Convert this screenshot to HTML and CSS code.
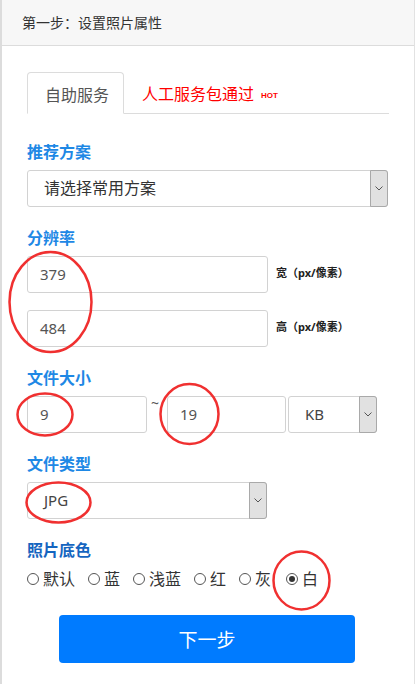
FILE: index.html
```html
<!DOCTYPE html>
<html lang="zh">
<head>
<meta charset="utf-8">
<title>设置照片属性</title>
<link rel="stylesheet" href="styles.css">
</head>
<body>
<div class="card">
  <div class="card-header">第一步：设置照片属性</div>
  <div class="card-body">
    <div class="tabs">
      <div class="tab active">自助服务</div>
      <div class="tab hot">人工服务包通过<span class="hot-badge">HOT</span></div>
    </div>

    <div class="label first">推荐方案</div>
    <div class="select full">
      <span class="select-text">请选择常用方案</span>
      <span class="select-btn"><svg width="8" height="5" viewBox="0 0 8 5"><path d="M0.5 0.5 L4 4 L7.5 0.5" fill="none" stroke="#555" stroke-width="1"/></svg></span>
    </div>

    <div class="label">分辨率</div>
    <div class="res-row">
      <div class="input res-input">379</div>
      <span class="unit">宽（px/像素）</span>
    </div>
    <div class="res-row second">
      <div class="input res-input">484</div>
      <span class="unit">高（px/像素）</span>
    </div>

    <div class="label">文件大小</div>
    <div class="size-row">
      <div class="input size-input">9</div>
      <span class="tilde">~</span>
      <div class="input size-input2">19</div>
      <div class="select kb">
        <span class="select-text">KB</span>
        <span class="select-btn"><svg width="8" height="5" viewBox="0 0 8 5"><path d="M0.5 0.5 L4 4 L7.5 0.5" fill="none" stroke="#555" stroke-width="1"/></svg></span>
      </div>
    </div>

    <div class="label">文件类型</div>
    <div class="select type">
      <span class="select-text">JPG</span>
      <span class="select-btn"><svg width="8" height="5" viewBox="0 0 8 5"><path d="M0.5 0.5 L4 4 L7.5 0.5" fill="none" stroke="#555" stroke-width="1"/></svg></span>
    </div>

    <div class="label dark">照片底色</div>
    <div class="radios">
      <span class="radio"><span class="dot"></span>默认</span>
      <span class="radio"><span class="dot"></span>蓝</span>
      <span class="radio"><span class="dot"></span>浅蓝</span>
      <span class="radio"><span class="dot"></span>红</span>
      <span class="radio"><span class="dot"></span>灰</span>
      <span class="radio checked"><span class="dot"></span>白</span>
    </div>

    <button class="next-btn">下一步</button>
  </div>
</div>

<svg class="marks" width="415" height="684" viewBox="0 0 415 684">
  <g fill="none" stroke="#f03030" stroke-width="2.5">
    <ellipse cx="50.5" cy="302" rx="41" ry="50"/>
    <ellipse cx="45" cy="414.5" rx="27.5" ry="21"/>
    <ellipse cx="189.5" cy="414" rx="29" ry="30"/>
    <ellipse cx="58.5" cy="502.5" rx="32" ry="20"/>
    <ellipse cx="301.5" cy="580.5" rx="28" ry="29"/>
  </g>
</svg>
</body>
</html>
```

FILE: styles.css
```css
html, body {
  margin: 0;
  padding: 0;
  background: #fff;
}
body {
  font-family: "Noto Sans", "Noto Sans CJK SC", sans-serif;
  color: #333;
  position: relative;
  width: 415px;
  height: 684px;
  overflow: hidden;
}
.card {
  border-left: 2px solid #dcdcdc;
  border-right: 1px solid #e2e2e2;
  height: 684px;
  box-sizing: border-box;
}
.card-header {
  height: 45px;
  background: #f7f7f7;
  border-bottom: 1px solid #dcdcdc;
  padding-left: 20px;
  font-size: 14px;
  line-height: 45px;
  color: #333;
}
.card-body {
  padding: 26px 25px 0 25px;
}
.tabs {
  display: flex;
  align-items: flex-end;
  border-bottom: 1px solid #dcdcdc;
  height: 41px;
}
.tab {
  height: 41px;
  box-sizing: border-box;
  font-size: 16px;
  line-height: 44px;
}
.tab.active {
  width: 97px;
  border: 1px solid #dcdcdc;
  border-bottom: 1px solid #fff;
  border-radius: 4px 4px 0 0;
  margin-bottom: -1px;
  height: 42px;
  padding-left: 17px;
  color: #555;
  background: #fff;
}
.tab.hot {
  padding-left: 18px;
  color: #ff0000;
}
.hot-badge {
  font-size: 8px;
  font-weight: bold;
  margin-left: 7px;
  vertical-align: 2px;
  font-family: "Liberation Sans", sans-serif;
}
.label {
  font-size: 16px;
  font-weight: bold;
  color: #1e88e5;
  line-height: 22px;
  margin: 20px 0 7px;
}
.label.first {
  margin-top: 27px;
}
.label.dark {
  color: #1565c0;
}
.select {
  display: flex;
  height: 37px;
  box-sizing: border-box;
  border: 1px solid #d2d2d2;
  border-radius: 3px;
  background: #fff;
}
.select.full {
  width: 361px;
}
.select.type {
  width: 240px;
}
.select.kb {
  width: 89px;
  margin-left: 2px;
}
.select-text {
  flex: 1;
  padding-left: 16px;
  font-size: 16px;
  line-height: 35px;
  color: #333;
}
.select.kb .select-text,
.select.type .select-text {
  font-size: 15px;
  color: #444;
}
.select-btn {
  width: 16px;
  margin: -1px -1px -1px 0;
  background: #e1e1e1;
  border: 1px solid #a9a9a9;
  border-radius: 0 3px 3px 0;
  display: flex;
  align-items: center;
  justify-content: center;
}
.input {
  height: 37px;
  box-sizing: border-box;
  border: 1px solid #d2d2d2;
  border-radius: 3px;
  padding-left: 12px;
  font-size: 15px;
  line-height: 35px;
  color: #555;
  background: #fff;
}
.res-row {
  display: flex;
  align-items: center;
}
.res-row.second {
  margin-top: 17px;
}
.res-input {
  width: 241px;
}
.unit {
  margin-left: 8px;
  font-size: 11px;
  font-weight: bold;
  color: #222;
  margin-top: -6px;
}
.size-row {
  display: flex;
}
.size-input {
  width: 120px;
}
.size-input2 {
  width: 119px;
}
.tilde {
  width: 20px;
  box-sizing: border-box;
  padding-left: 4px;
  font-size: 14px;
  line-height: 10px;
  color: #555;
  margin-top: 2px;
}
.radios {
  display: flex;
  gap: 13px;
  font-size: 16px;
  line-height: 22px;
  color: #333;
}
.radio {
  display: flex;
  align-items: center;
  gap: 4px;
}
.dot {
  width: 12px;
  height: 12px;
  box-sizing: border-box;
  border: 1px solid #555;
  border-radius: 50%;
  display: flex;
  align-items: center;
  justify-content: center;
}
.radio:last-child {
  margin-left: 2px;
}
.radio.checked .dot::after {
  content: "";
  width: 6px;
  height: 6px;
  border-radius: 50%;
  background: #333;
}
.next-btn {
  display: block;
  width: 296px;
  height: 48px;
  margin: 25px auto 0;
  border: none;
  border-radius: 4px;
  background: #007bff;
  color: #fff;
  font-family: "Noto Sans", "Noto Sans CJK SC", sans-serif;
  font-size: 19px;
  position: relative;
  left: -1px;
}
.marks {
  position: absolute;
  top: 0;
  left: 0;
  pointer-events: none;
}
```
